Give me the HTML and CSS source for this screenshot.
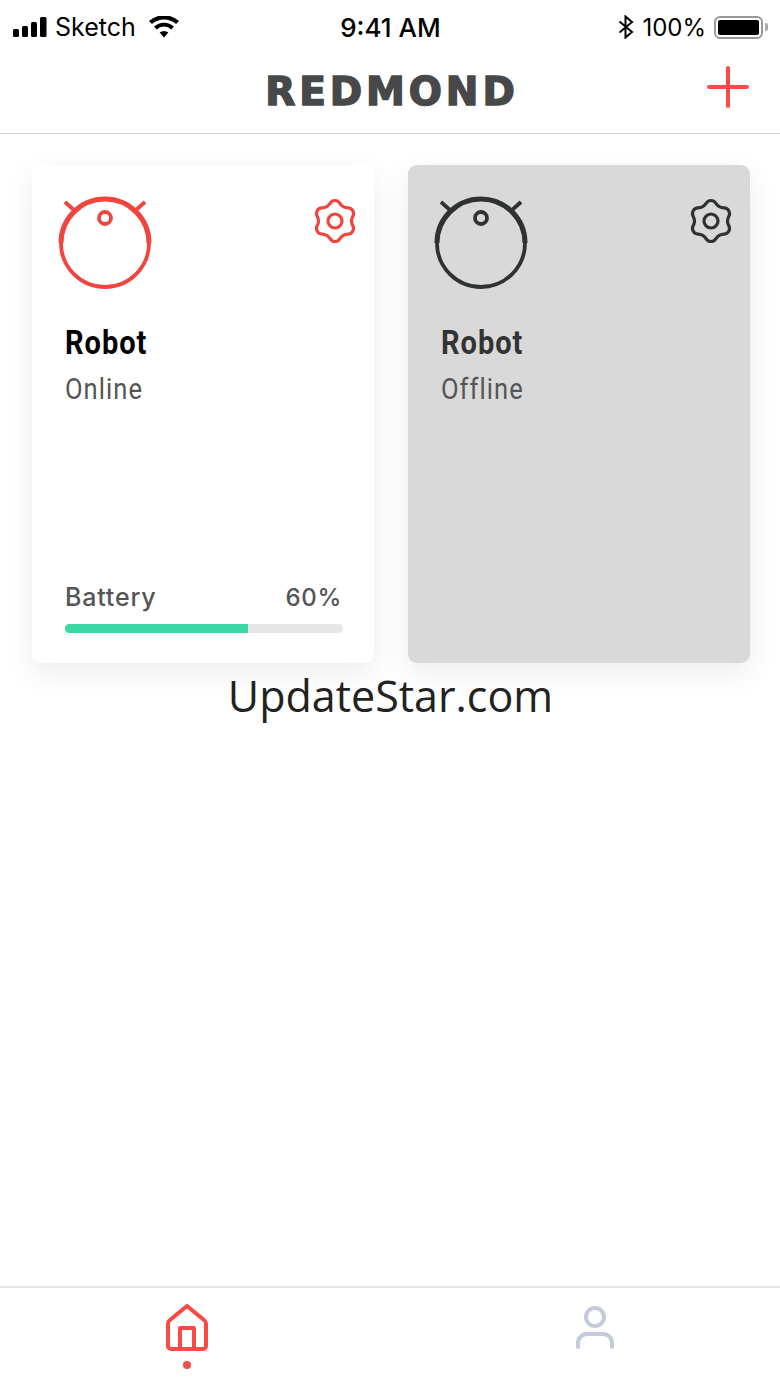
FILE: index.html
```html
<!DOCTYPE html>
<html lang="en">
<head>
    <meta charset="UTF-8">
    <meta name="viewport" content="width=device-width, initial-scale=1.0">
    <title>Redmond robots</title>
    <link rel="stylesheet" href="styles.css">
</head>
<body>
    <div class="status-bar">
        <div class="status-left">
            <svg class="signal" width="34" height="20" viewBox="0 0 34 20">
                <rect x="0" y="12" width="6" height="8" rx="1.5"/>
                <rect x="9" y="9" width="6" height="11" rx="1.5"/>
                <rect x="18" y="5" width="6" height="15" rx="1.5"/>
                <rect x="27" y="0" width="6.5" height="20" rx="1.5"/>
            </svg>
            <span class="carrier">Sketch</span>
            <svg class="wifi" width="30" height="22" viewBox="0 0 30 22">
                <path d="M15 21.5 10.6 16.6a6.6 6.6 0 0 1 8.8 0Z"/>
                <path d="M7.6 13.4 5 10.5a15 15 0 0 1 20 0l-2.6 2.9a11 11 0 0 0-14.8 0Z"/>
                <path d="M2.9 8.1 0 5a22.5 22.5 0 0 1 30 0l-2.9 3.1a18.2 18.2 0 0 0-24.2 0Z"/>
            </svg>
        </div>
        <div class="status-time">9:41 AM</div>
        <div class="status-right">
            <svg class="bluetooth" width="16" height="24" viewBox="0 0 16 24">
                <path d="M1.500 6.500 14 17l-6.500 5.500v-21L14 7 1.500 17.500" fill="none" stroke="#000" stroke-width="2"/>
            </svg>
            <span class="battery-pct">100%</span>
            <div class="battery-icon">
                <div class="battery-level"></div>
            </div>
            <div class="battery-nub"></div>
        </div>
    </div>

    <header class="app-header">
        <div class="logo">REDMOND</div>
        <svg class="add-btn" width="42" height="42" viewBox="0 0 42 42">
            <path d="M21 2v38M2 21h38" stroke="#f94a45" stroke-width="4" stroke-linecap="round" fill="none"/>
        </svg>
    </header>

    <main class="content">
        <div class="cards">
            <div class="card">
                <div class="card-top">
                    <svg class="robot-icon" width="100" height="100" viewBox="0 0 100 100">
                        <path class="thin" d="M6 50a44 44 0 0 0 88 0"/>
                        <path class="thick" d="M6 50a44 44 0 0 1 88 0"/>
                        <path class="thin" d="M10 9l9 8M90 9l-9 8"/>
                        <circle class="thin" cx="50" cy="25" r="6"/>
                    </svg>
                    <svg class="gear-icon" width="46" height="46" viewBox="-23 -23 46 46">
                        <path d="M0-20.500C5.500-20.500 3.490-17.040 8.250-14.290S15-15.010 17.750-10.250 16.500-5.500 16.500 0 20.500 5.490 17.750 10.250 13.010 11.540 8.250 14.290 5.500 20.500 0 20.500-3.490 17.040-8.250 14.290-15 15.010-17.750 10.250-16.500 5.500-16.500 0-20.500-5.490-17.750-10.250-13.010-11.540-8.250-14.290-5.500-20.500 0-20.500Z"/>
                        <circle cx="0" cy="0" r="7"/>
                    </svg>
                </div>
                <div class="card-name">Robot</div>
                <div class="card-status">Online</div>
                <div class="battery">
                    <div class="battery-row">
                        <span>Battery</span>
                        <span class="battery-value">60%</span>
                    </div>
                    <div class="battery-track">
                        <div class="battery-fill" style="width: 66%"></div>
                    </div>
                </div>
            </div>

            <div class="card offline">
                <div class="card-top">
                    <svg class="robot-icon" width="100" height="100" viewBox="0 0 100 100">
                        <path class="thin" d="M6 50a44 44 0 0 0 88 0"/>
                        <path class="thick" d="M6 50a44 44 0 0 1 88 0"/>
                        <path class="thin" d="M10 9l9 8M90 9l-9 8"/>
                        <circle class="thin" cx="50" cy="25" r="6"/>
                    </svg>
                    <svg class="gear-icon" width="46" height="46" viewBox="-23 -23 46 46">
                        <path d="M0-20.500C5.500-20.500 3.490-17.040 8.250-14.290S15-15.010 17.750-10.250 16.500-5.500 16.500 0 20.500 5.490 17.750 10.250 13.010 11.540 8.250 14.290 5.500 20.500 0 20.500-3.490 17.040-8.250 14.290-15 15.010-17.750 10.250-16.500 5.500-16.500 0-20.500-5.490-17.750-10.250-13.010-11.540-8.250-14.290-5.500-20.500 0-20.500Z"/>
                        <circle cx="0" cy="0" r="7"/>
                    </svg>
                </div>
                <div class="card-name">Robot</div>
                <div class="card-status">Offline</div>
            </div>
        </div>
        <div class="watermark">UpdateStar.com</div>
    </main>

    <nav class="tab-bar">
        <div class="tab tab-home">
            <svg width="44" height="48" viewBox="0 0 44 48">
                <path d="M22 2 5 16a5 5 0 0 0-2 4V42a3 3 0 0 0 3 3h32a3 3 0 0 0 3-3V20a5 5 0 0 0-2-4Z"/>
                <path d="M15 45V24h14v21"/>
            </svg>
            <div class="tab-dot"></div>
        </div>
        <div class="tab tab-profile">
            <svg width="40" height="44" viewBox="0 0 40 44">
                <circle cx="20" cy="11" r="9"/>
                <path d="M3 41v-4a9 9 0 0 1 9-9h16a9 9 0 0 1 9 9v4"/>
            </svg>
        </div>
    </nav>
</body>
</html>
```

FILE: styles.css
```css
html, body {
    margin: 0;
    padding: 0;
}

body {
    width: 780px;
    height: 1387px;
    overflow: hidden;
    display: flex;
    flex-direction: column;
    background: #fff;
    font-family: 'Inter', sans-serif;
    color: #000;
}

/* status bar */
.status-bar {
    display: grid;
    grid-template-columns: 1fr auto 1fr;
    align-items: center;
    height: 54px;
    padding: 0 12px 0 13px;
    box-sizing: border-box;
    font-size: 24px;
}

.status-left,
.status-right {
    display: flex;
    align-items: center;
}

.status-right {
    justify-content: flex-end;
}

.carrier {
    margin-left: 8px;
    font-size: 25px;
    font-weight: 400;
}

.wifi {
    margin-left: 13px;
}

.status-time {
    font-size: 26px;
    font-weight: 500;
}

.bluetooth {
    margin-right: 8px;
}

.battery-pct {
    margin-right: 8px;
}

.battery-icon {
    width: 49px;
    height: 23px;
    box-sizing: border-box;
    border: 2px solid #999;
    border-radius: 6px;
    padding: 2px;
}

.battery-level {
    height: 100%;
    background: #000;
    border-radius: 2px;
}

.battery-nub {
    width: 3px;
    height: 8px;
    margin-left: 2px;
    background: #aaa;
    border-radius: 0 2px 2px 0;
}

/* header */
.app-header {
    display: grid;
    grid-template-columns: 1fr auto 1fr;
    align-items: center;
    height: 80px;
    padding: 0 31px;
    box-sizing: border-box;
    border-bottom: 1px solid #d4d4d4;
}

.logo {
    grid-column: 2;
    font-family: 'DejaVu Sans', sans-serif;
    font-weight: 700;
    font-size: 39px;
    line-height: 40px;
    letter-spacing: 3.9px;
    padding-left: 4px;
    color: #464849;
    -webkit-text-stroke: 1.5px #464849;
    margin-bottom: 3px;
}

.add-btn {
    grid-column: 3;
    justify-self: end;
    margin-bottom: 13px;
}

/* cards */
.content {
    flex: 1;
    padding: 31px 30px 0 32px;
}

.cards {
    display: grid;
    grid-template-columns: 342px 342px;
    gap: 34px;
}

.card {
    height: 498px;
    box-sizing: border-box;
    padding: 28px 16px 30px 33px;
    display: flex;
    flex-direction: column;
    background: #fff;
    border-radius: 9px;
    box-shadow: 0 10px 30px rgba(0, 0, 0, 0.08);
    --accent: #f0443f;
}

.card.offline {
    background: #d9d9d9;
    --accent: #2f3233;
}

.card-top {
    display: flex;
    justify-content: space-between;
    align-items: flex-start;
    margin-left: -10px;
}

.robot-icon {
    fill: none;
    stroke: var(--accent);
}

.robot-icon .thin {
    stroke-width: 3.8;
}

.robot-icon .thick {
    stroke-width: 5;
}

.gear-icon {
    margin-top: 5px;
    fill: none;
    stroke: var(--accent);
    stroke-width: 3.2;
}

.card-name {
    margin-top: 30px;
    font-family: 'Roboto', sans-serif;
    font-weight: 700;
    font-size: 33px;
    line-height: 40px;
    letter-spacing: 1.1px;
    transform: scaleX(0.88);
    transform-origin: left;
}

.offline .card-name {
    color: #333;
}

.card-status {
    margin-top: 8px;
    font-family: 'Roboto', sans-serif;
    font-weight: 400;
    font-size: 29px;
    line-height: 36px;
    letter-spacing: 1.2px;
    color: #555;
    transform: scaleX(0.88);
    transform-origin: left;
}

.battery {
    margin-top: auto;
    padding-right: 15px;
}

.battery-row {
    display: flex;
    justify-content: space-between;
    align-items: baseline;
    font-size: 25px;
    line-height: 30px;
    font-weight: 500;
    letter-spacing: 0.8px;
    color: #555;
    padding-right: 1px;
}

.battery-value {
    font-size: 24px;
    letter-spacing: 0.7px;
}

.battery-track {
    height: 9px;
    margin-top: 11px;
    background: #e6e6e6;
    border-radius: 5px;
    overflow: hidden;
}

.battery-fill {
    height: 100%;
    background: #3bd8a6;
}

.watermark {
    margin-top: 5px;
    text-align: center;
    font-family: 'Open Sans', sans-serif;
    font-size: 43px;
    line-height: 56px;
    color: #222;
    padding-right: 1px;
}

/* bottom tabs */
.tab-bar {
    display: flex;
    justify-content: space-between;
    align-items: flex-start;
    height: 101px;
    box-sizing: border-box;
    padding: 16px 165px 0 165px;
    border-top: 2px solid #e6e6e6;
}

.tab {
    display: flex;
    flex-direction: column;
    align-items: center;
}

.tab svg {
    fill: none;
    stroke-width: 4;
}

.tab-home svg {
    stroke: #f94a45;
    stroke-linejoin: round;
}

.tab-profile {
    margin-top: 2px;
}

.tab-profile svg {
    stroke: #c5c9dc;
    stroke-linecap: round;
}

.tab-dot {
    width: 8px;
    height: 8px;
    margin-top: 9px;
    border-radius: 50%;
    background: #f94a45;
}
```
